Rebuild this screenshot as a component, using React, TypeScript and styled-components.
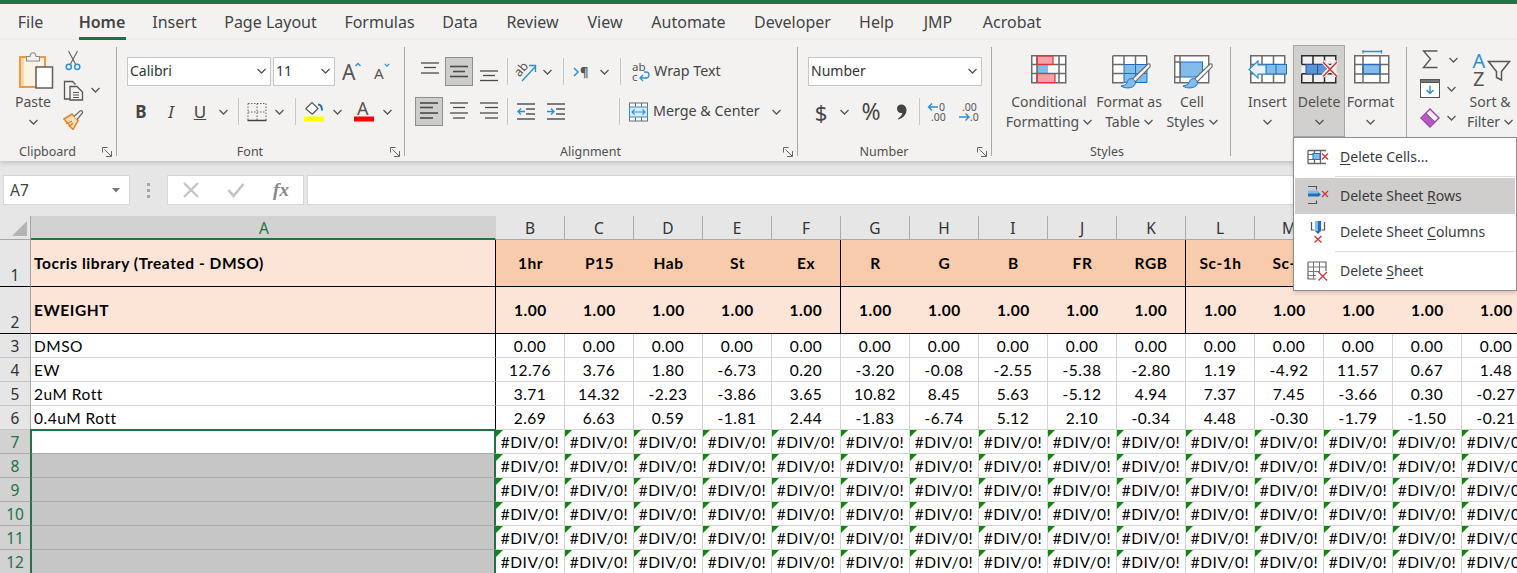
import styled, { createGlobalStyle } from 'styled-components'

const UI_FONT = '"Noto Sans", "Open Sans", sans-serif'
const CELL_FONT = 'Lato, "Noto Sans", sans-serif'
const GREEN = '#217346'
const GREY = '#6a6a6a'
const BLUE = '#2b8fd8'
const LIGHT_BLUE = '#83bbea'
const DEEP_BLUE = '#1b6ec2'
const RED = '#d13438'

const GlobalStyle = createGlobalStyle`
  html, body {
    margin: 0;
    padding: 0;
    background: #fff;
  }
  * {
    box-sizing: border-box;
  }
`

const Page = styled.div`
  position: relative;
  width: 1517px;
  height: 573px;
  overflow: hidden;
  font-family: ${UI_FONT};
  color: #444;
  background: #e6e6e6;
`

const TitleStrip = styled.div`
  height: 4px;
  background: ${GREEN};
`

const TabBar = styled.div`
  display: flex;
  height: 36px;
  padding-left: 4px;
  background: #f3f2f1;
`

const Tab = styled.div<{ $w: number; $ml?: number; $active?: boolean }>`
  position: relative;
  width: ${({ $w }) => $w}px;
  margin-left: ${({ $ml }) => $ml ?? 0}px;
  height: 36px;
  line-height: 37px;
  flex: none;
  text-align: center;
  font-size: 16px;
  white-space: nowrap;
  font-weight: ${({ $active }) => ($active ? 600 : 400)};
  color: #444;

  &::after {
    content: '';
    display: ${({ $active }) => ($active ? 'block' : 'none')};
    position: absolute;
    left: 14px;
    right: 13px;
    bottom: 0;
    height: 3px;
    background: ${GREEN};
  }
`

const Ribbon = styled.div`
  display: flex;
  height: 121px;
  padding-top: 7px;
  background: #f3f2f1;
  box-shadow: 0 2px 5px rgba(0, 0, 0, 0.16);
  position: relative;
  z-index: 2;
`

const Group = styled.div<{ $w: number; $last?: boolean }>`
  width: ${({ $w }) => $w}px;
  height: 109px;
  flex: none;
  display: flex;
  flex-direction: column;
  border-right: ${({ $last }) => ($last ? 'none' : '1px solid #a9a9a9')};
`

const GroupBody = styled.div<{ $pl: number }>`
  height: 92px;
  flex: none;
  display: flex;
  padding-left: ${({ $pl }) => $pl}px;
`

const GroupFooter = styled.div<{ $pr: number }>`
  flex: 1;
  display: flex;
  align-items: flex-start;
  padding-right: ${({ $pr }) => $pr}px;
`

const GroupLabel = styled.div`
  flex: 1;
  text-align: center;
  font-size: 12.5px;
  line-height: 17px;
  padding: 4px 7px 0 0;
  color: #505050;
`

const Launcher = styled.div`
  width: 10px;
  height: 10px;
  margin-top: 8px;
  flex: none;
  display: flex;
`

const RowsColumn = styled.div`
  display: flex;
  flex-direction: column;
  gap: 11px;
  padding-top: 10px;
`

const ToolRow = styled.div`
  display: flex;
  align-items: center;
  height: 29px;
`

const Tool = styled.div<{ $w: number; $ml?: number; $active?: boolean }>`
  width: ${({ $w }) => $w}px;
  height: 29px;
  margin-left: ${({ $ml }) => $ml ?? 0}px;
  flex: none;
  display: flex;
  align-items: center;
  justify-content: center;
  color: #444;
  background: ${({ $active }) => ($active ? '#cdcdcb' : 'transparent')};
  border: ${({ $active }) => ($active ? '1px solid #8e8e8e' : 'none')};
`

const Divider = styled.div<{ $ml: number }>`
  width: 1px;
  height: 27px;
  margin-left: ${({ $ml }) => $ml}px;
  flex: none;
  background: #c8c6c4;
`

const ToolText = styled.span<{ $w: number; $ml: number }>`
  width: ${({ $w }) => $w}px;
  margin-left: ${({ $ml }) => $ml}px;
  padding-bottom: 2px;
  flex: none;
  font-size: 14.3px;
  white-space: nowrap;
  color: #444;
`

const Glyph = styled.span<{ $size: number; $bold?: boolean; $italic?: boolean; $under?: boolean }>`
  font-family: ${UI_FONT};
  font-size: ${({ $size }) => $size}px;
  line-height: 1;
  color: #444;
  font-weight: ${({ $bold }) => ($bold ? 700 : 400)};
  font-style: ${({ $italic }) => ($italic ? 'italic' : 'normal')};
  text-decoration: ${({ $under }) => ($under ? 'underline' : 'none')};
`

const Select = styled.div<{ $w: number; $ml?: number }>`
  width: ${({ $w }) => $w}px;
  height: 29px;
  margin-left: ${({ $ml }) => $ml ?? 0}px;
  flex: none;
  display: flex;
  align-items: center;
  justify-content: space-between;
  padding: 0 4px 2px 2px;
  background: #fff;
  border: 1px solid #c6c6c6;
  font-size: 14px;
  color: #333;
`

const LargeButton = styled.div<{ $w: number; $open?: boolean }>`
  width: ${({ $w }) => $w}px;
  height: 92px;
  margin-top: -2px;
  flex: none;
  display: flex;
  flex-direction: column;
  align-items: center;
  padding-top: 5px;
  background: ${({ $open }) => ($open ? '#d2d0ce' : 'transparent')};
  box-shadow: ${({ $open }) => ($open ? 'inset 0 0 0 1px #a6a6a6' : 'none')};
`

const LargeIcon = styled.div<{ $shift?: number }>`
  height: 42px;
  flex: none;
  display: flex;
  justify-content: center;
  padding-left: ${({ $shift }) => ($shift ?? 0) * 2}px;
`

const LargeLine = styled.div`
  height: 20px;
  line-height: 20px;
  display: flex;
  align-items: center;
  gap: 4px;
  font-size: 14px;
  white-space: nowrap;
  color: #505050;
`

const SmallStack = styled.div<{ $rowH: number }>`
  display: grid;
  grid-auto-rows: ${({ $rowH }) => $rowH}px;
  margin-top: -2px;
`

const StackRow = styled.div`
  display: flex;
  align-items: center;
`

const StackIcon = styled.div<{ $w: number }>`
  width: ${({ $w }) => $w}px;
  flex: none;
  display: flex;
  justify-content: center;
`

const StackChevron = styled.div<{ $w: number }>`
  width: ${({ $w }) => $w}px;
  flex: none;
  display: flex;
  justify-content: center;
`

const FormulaBar = styled.div`
  height: 55px;
  display: flex;
  align-items: flex-start;
  padding: 14px 0 0 3px;
  background: #e6e6e6;
`

const NameBox = styled.div`
  width: 127px;
  height: 30px;
  flex: none;
  display: flex;
  align-items: center;
  justify-content: space-between;
  padding: 0 8px 0 6px;
  background: #fff;
  border: 1px solid #d6d6d6;
  font-size: 15.5px;
  color: #444;
`

const GripDots = styled.div`
  width: 37px;
  height: 30px;
  flex: none;
  display: flex;
  flex-direction: column;
  align-items: center;
  justify-content: center;
  gap: 3px;

  span {
    width: 3px;
    height: 3px;
    background: #a6a6a6;
  }
`

const FormulaButtons = styled.div`
  width: 137px;
  height: 30px;
  flex: none;
  display: flex;
  align-items: center;
  background: #fff;
  border: 1px solid #d6d6d6;
`

const FormulaButton = styled.div<{ $w: number }>`
  width: ${({ $w }) => $w}px;
  flex: none;
  display: flex;
  justify-content: center;
`

const FxLabel = styled.span`
  font-family: 'Liberation Serif', serif;
  font-style: italic;
  font-weight: 700;
  font-size: 19px;
  color: #888;
`

const FormulaInput = styled.div`
  flex: 1;
  height: 30px;
  margin-left: 3px;
  background: #fff;
  border: 1px solid #d6d6d6;
  border-right: none;
`

const Sheet = styled.div`
  display: grid;
  width: 1531px;
  grid-template-columns: 31px 465px repeat(15, 69px);
  grid-template-rows: 24px 47px 47px repeat(10, 24px);
  background: #fff;
  font-family: ${CELL_FONT};
`

const Corner = styled.div`
  background: #e6e6e6;
  border-right: 1px solid #a6a6a6;
  border-bottom: 1px solid #a6a6a6;
  display: flex;
  align-items: flex-end;
  justify-content: flex-end;
  padding: 0 3px 3px 0;

  &::after {
    content: '';
    width: 0;
    height: 0;
    border-left: 15px solid transparent;
    border-bottom: 15px solid #b4b4b4;
  }
`

const ColumnHead = styled.div<{ $selected?: boolean }>`
  display: flex;
  align-items: center;
  justify-content: center;
  padding: 1px 0 0 ${({ $selected }) => ($selected ? 2 : 0)}px;
  font-family: ${UI_FONT};
  font-size: 15.5px;
  color: ${({ $selected }) => ($selected ? GREEN : '#333')};
  background: ${({ $selected }) => ($selected ? '#d2d2d2' : '#e6e6e6')};
  border-right: 1px solid ${({ $selected }) => ($selected ? '#d2d2d2' : '#ababab')};
  border-bottom: ${({ $selected }) => ($selected ? `2px solid ${GREEN}` : '1px solid #ababab')};
`

const RowHead = styled.div<{ $selected?: boolean; $tall?: boolean }>`
  display: flex;
  align-items: ${({ $tall }) => ($tall ? 'flex-end' : 'center')};
  justify-content: center;
  font-family: ${UI_FONT};
  font-size: 15.5px;
  color: ${({ $selected }) => ($selected ? GREEN : '#333')};
  background: ${({ $selected }) => ($selected ? '#d2d2d2' : '#e6e6e6')};
  border-right: 1px solid #a6a6a6;
  border-bottom: 1px solid ${({ $selected, $tall }) => ($tall ? '#000' : $selected ? '#ababab' : '#c4c4c4')};
`

const TitleCell = styled.div<{ $tone: 'dark' | 'light'; $edge?: boolean; $first?: boolean }>`
  display: flex;
  align-items: center;
  justify-content: ${({ $first }) => ($first ? 'flex-start' : 'center')};
  padding-left: ${({ $first }) => ($first ? '3px' : '0')};
  font-weight: 700;
  font-size: 15.5px;
  letter-spacing: 0.55px;
  color: #000;
  white-space: nowrap;
  overflow: hidden;
  background: ${({ $tone }) => ($tone === 'dark' ? '#f8cbad' : '#fce4d6')};
  border-bottom: 1px solid #000;
  border-right: ${({ $edge }) => ($edge ? '1px solid #000' : 'none')};
`

const DataCell = styled.div<{ $error?: boolean }>`
  position: relative;
  display: flex;
  align-items: center;
  justify-content: center;
  padding-top: 1px;
  font-size: 15.5px;
  letter-spacing: 0.5px;
  color: #000;
  white-space: nowrap;
  overflow: hidden;
  border-right: 1px solid #d4d4d4;
  border-bottom: 1px solid #d4d4d4;

  &::before {
    content: '';
    display: ${({ $error }) => ($error ? 'block' : 'none')};
    position: absolute;
    left: 0;
    top: 0;
    border-top: 7px solid #0a8a0a;
    border-right: 7px solid transparent;
  }
`

const LabelCell = styled(DataCell)`
  justify-content: flex-start;
  padding-left: 3px;
  border-right: 1px solid #000;
`

const SelectedCell = styled.div<{ $active?: boolean }>`
  background: ${({ $active }) => ($active ? '#fff' : '#c6c6c6')};
  border-left: 1px solid ${GREEN};
  border-right: 2px solid ${GREEN};
  border-top: ${({ $active }) => ($active ? `1px solid ${GREEN}` : 'none')};
  border-bottom: 1px solid #ababab;
  box-shadow: -1px 0 0 ${GREEN};
  position: relative;

  &::before {
    content: '';
    display: ${({ $active }) => ($active ? 'block' : 'none')};
    position: absolute;
    left: -2px;
    right: -2px;
    top: -2px;
    height: 1px;
    background: ${GREEN};
  }
`

const Menu = styled.div`
  position: absolute;
  left: 1293px;
  top: 137px;
  width: 224px;
  height: 154px;
  z-index: 5;
  display: flex;
  flex-direction: column;
  padding: 1px;
  background: #fff;
  border: 1px solid #8f8f8f;
  box-shadow: 0 2px 4px rgba(0, 0, 0, 0.15);
`

const MenuItem = styled.div<{ $h: number; $pb: number; $hot?: boolean }>`
  height: ${({ $h }) => $h}px;
  padding-bottom: ${({ $pb }) => $pb}px;
  flex: none;
  display: flex;
  align-items: center;
  background: ${({ $hot }) => ($hot ? '#d0cecc' : 'transparent')};
`

const MenuIcon = styled.div`
  width: 45px;
  flex: none;
  display: flex;
  justify-content: center;
`

const MenuText = styled.span`
  font-size: 14px;
  color: #3a3a3a;
  white-space: nowrap;

  u {
    text-underline-offset: 2px;
  }
`

const MenuRule = styled.div<{ $mb?: number }>`
  height: 1px;
  flex: none;
  margin: 0 0 ${({ $mb }) => $mb ?? 0}px 40px;
  background: #dcdcdc;
`

const Chevron = () => (
  <svg width="9" height="6" viewBox="0 0 9 6" fill="none" stroke="#555" strokeWidth="1.3">
    <polyline points="0.5,1 4.5,5 8.5,1" />
  </svg>
)

const LauncherIcon = () => (
  <svg width="10" height="10" viewBox="0 0 10 10" fill="none" stroke="#666" strokeWidth="1">
    <polyline points="5.5,0.5 0.5,0.5 0.5,5.5" />
    <polyline points="9.5,4 9.5,9.5 4,9.5" />
    <line x1="2.5" y1="2.5" x2="9" y2="9" />
  </svg>
)

const PasteIcon = () => (
  <svg width="36" height="42" viewBox="0 0 36 42" fill="none">
    <rect x="2" y="7" width="25" height="30" fill="#fdf3e3" stroke="#ed9b3e" strokeWidth="2" />
    <rect x="3" y="8" width="3" height="28" fill="#f9d9a8" />
    <path d="M8.500 11V6.500h3.500c.5-5 5.500-5 6 0h3.500V11z" fill="#f3f2f1" stroke="#8a8a8a" strokeWidth="1.200" />
    <rect x="18" y="17" width="16.500" height="21" fill="#fff" stroke="#5e5e5e" strokeWidth="1.500" />
  </svg>
)

const CutIcon = () => (
  <svg width="16" height="21" viewBox="0 0 16 21" fill="none">
    <line x1="3.5" y1="1" x2="10.5" y2="14" stroke={GREY} strokeWidth="1.2" />
    <line x1="12.5" y1="1" x2="5.5" y2="14" stroke={GREY} strokeWidth="1.2" />
    <circle cx="3.8" cy="16.8" r="2.6" stroke={BLUE} strokeWidth="1.5" />
    <circle cx="12.2" cy="16.8" r="2.6" stroke={BLUE} strokeWidth="1.5" />
  </svg>
)

const CopyIcon = () => (
  <svg width="21" height="21" viewBox="0 0 21 21" fill="none" stroke="#555">
    <path d="M7 19H1.500V1.500h8l3 3" strokeWidth="1.300" />
    <path d="M7 6.500h7l5.500 5.500v8H7z" fill="#f3f2f1" strokeWidth="1.300" />
    <path d="M10 12.500h6M10 15h6M10 17.500h6" strokeWidth="1" />
  </svg>
)

const PainterIcon = () => (
  <svg width="21" height="20" viewBox="0 0 21 20" fill="none">
    <path d="M1 9l8-5 6 6.500-5 9z" fill="#fbe0c0" stroke="#e8821e" strokeWidth="1.500" />
    <path d="M3 14l6-3M6 17l4-4" stroke="#e8821e" strokeWidth="1.300" />
    <path d="M11 6.500l6-5.500c2-1 3.500 1 2 2.500l-5 6" fill="#f3f2f1" stroke={GREY} strokeWidth="1.200" />
  </svg>
)

const AlignLines = ({ spec, width }: { spec: number[][]; width?: number }) => (
  <svg width="20" height="20" viewBox="0 0 20 20" stroke="#4a4a4a" strokeWidth={width ?? 1.300}>
    {spec.map(([x1, x2, y], i) => (
      <line key={i} x1={x1} x2={x2} y1={y} y2={y} />
    ))}
  </svg>
)

const OrientationIcon = () => (
  <svg width="22" height="20" viewBox="0 0 22 20" fill="none">
    <text x="0" y="12" fontSize="12.500" fill="#555" fontFamily={UI_FONT} transform="rotate(-50 6 9)">ab</text>
    <path d="M7 19L20 5M14 3.500h6.500V10" stroke={BLUE} strokeWidth="1.400" />
  </svg>
)

const ParagraphIcon = () => (
  <svg width="17" height="16" viewBox="0 0 17 16" fill="none">
    <polyline points="1,4 5,8 1,12" stroke={BLUE} strokeWidth="1.500" />
    <text x="7" y="13" fontSize="13" fontWeight="700" fill="#555" fontFamily={UI_FONT}>¶</text>
  </svg>
)

const IndentIcon = ({ increase }: { increase?: boolean }) => (
  <svg width="18" height="18" viewBox="0 0 18 18" fill="none">
    <path d="M0 1h18M9 6h9M9 11h9M0 16h18" stroke="#555" strokeWidth="1.300" />
    <path
      d={increase ? 'M0 8.500h7M4 5.500l3 3-3 3' : 'M8 8.500H1M4 5.500l-3 3 3 3'}
      stroke={BLUE}
      strokeWidth="1.400"
    />
  </svg>
)

const WrapIcon = () => (
  <svg width="18" height="20" viewBox="0 0 18 20" fill="none">
    <text x="0" y="9" fontSize="11.500" fill="#555" fontFamily={UI_FONT}>ab</text>
    <text x="0" y="19" fontSize="11.500" fill="#555" fontFamily={UI_FONT}>c</text>
    <path d="M9 16h5c4 0 4-6 0-6h-2M11 13l-3 3 3 3" stroke={BLUE} strokeWidth="1.300" />
  </svg>
)

const MergeIcon = () => (
  <svg width="20" height="20" viewBox="0 0 20 20" fill="none">
    <rect x="0.500" y="1" width="18" height="18" fill="#fff" stroke={GREY} />
    <path d="M6.500 1v4M12.500 1v4M6.500 15v4M12.500 15v4" stroke={GREY} />
    <rect x="0.500" y="5" width="18" height="10" fill="#d9ecfa" stroke={BLUE} />
    <path d="M3 10h13M5.500 7.500L3 10l2.500 2.500M13.500 7.500L16 10l-2.500 2.500" stroke={BLUE} strokeWidth="1.100" />
  </svg>
)

const GrowIcon = ({ up }: { up?: boolean }) => (
  <svg width="20" height="22" viewBox="0 0 20 22" fill="none">
    <text x="0" y="19" fontSize={up ? 21 : 17} fill="#555" fontFamily={UI_FONT}>A</text>
    <polyline
      points={up ? '13.500,5 16,2.500 18.500,5' : '12,2 14.500,4.500 17,2'}
      stroke={BLUE}
      strokeWidth="1.400"
    />
  </svg>
)

const BordersIcon = () => (
  <svg width="20" height="20" viewBox="0 0 20 20" fill="none" stroke="#666">
    <path d="M1 1.500h18M1 1.500v17M19 1.500v17M10 1.500v17M1 10h18" strokeDasharray="1.500 1.500" />
    <path d="M0.500 18.500h19" strokeWidth="1.500" stroke="#444" />
  </svg>
)

const FillIcon = () => (
  <svg width="22" height="22" viewBox="0 0 22 22" fill="none">
    <path d="M3 7.500l6-6 6 6-5 5a1 1 0 01-1.500 0L3 8z" fill="#fff" stroke="#555" strokeWidth="1.200" />
    <path d="M15 3.500c3 0 4 3 4 6" stroke={DEEP_BLUE} strokeWidth="2" />
    <rect x="1" y="15.500" width="20" height="5" fill="#ffff00" />
  </svg>
)

const FontColorIcon = () => (
  <svg width="22" height="24" viewBox="0 0 22 24" fill="none">
    <text x="4" y="15" fontSize="18" fill="#555" fontFamily={UI_FONT}>A</text>
    <rect x="1" y="16.500" width="20" height="5" fill="#ff0000" />
  </svg>
)

const CommaIcon = () => (
  <svg width="11" height="16" viewBox="0 0 11 16">
    <path d="M1 4.500C1 2 3 .5 5.500.5 8.500.5 10.500 3 10.500 6c0 4.500-3.500 8-8 9.500l-.5-1c2.500-1.500 4-3.500 4.300-5.500C3 9.500 1 7.500 1 4.500z" fill="#444" />
  </svg>
)

const DecimalIcon = ({ more }: { more?: boolean }) => (
  <svg width="21" height="22" viewBox="0 0 21 22" fill="none">
    <text x={more ? 12 : 4} y="9.500" fontSize="10.500" fill="#555" fontFamily={UI_FONT}>
      {more ? '0' : '.00'}
    </text>
    <text x={more ? 4 : 12} y="20" fontSize="10.500" fill="#555" fontFamily={UI_FONT}>
      {more ? '.00' : '.0'}
    </text>
    <path
      d={more ? 'M11 6H1.500M5 2.500L1.500 6 5 9.500' : 'M1 16h10M7.500 12.500L11 16l-3.500 3.500'}
      stroke={BLUE}
      strokeWidth="1.400"
    />
  </svg>
)

const Thirds = ({ stroke }: { stroke: string }) => (
  <path
    d="M0.750 5.750h34v27h-34zM0.750 14.500h34M0.750 23.750h34M12 5.750v27M23.500 5.750v27"
    fill="none"
    stroke={stroke}
    strokeWidth="1.500"
  />
)

const ConditionalIcon = () => (
  <svg width="36" height="42" viewBox="0 0 36 42">
    <rect x="0.500" y="6" width="35" height="26" fill="#fff" />
    <rect x="6" y="6" width="16" height="8.500" fill="#f8a0a8" />
    <rect x="6" y="23.500" width="18" height="9" fill="#f8a0a8" />
    <rect x="6" y="14.500" width="11" height="9" fill={LIGHT_BLUE} />
    <path
      d="M0.750 5.750h34v27h-34zM0.750 14.500h34M0.750 23.500h34M6 5.750v27M28 5.750v27"
      fill="none"
      stroke={GREY}
      strokeWidth="1.500"
    />
    <path d="M6 6h16v8.500H6zM6 23.500h18v9H6z" fill="none" stroke="#e3313a" strokeWidth="1.200" />
  </svg>
)

const Brush = () => (
  <g>
    <path d="M36 14L20 29.500l3 2.500L38 17c1-2.500-1-4-2-3z" fill="#fff" stroke={GREY} strokeWidth="1.100" />
    <path d="M19.500 28.500c-3.500 0-4 3-5 5-1 1.500-3 2-5.500 2.500 4 3 12 2.500 14-1.500 1-2.500 0-5-3.500-6z" fill={LIGHT_BLUE} stroke={DEEP_BLUE} strokeWidth="1" />
  </g>
)

const TableIcon = () => (
  <svg width="40" height="42" viewBox="0 0 40 42">
    <rect x="0.500" y="6" width="35" height="26" fill="#fff" />
    <rect x="12" y="14.500" width="23" height="18" fill={LIGHT_BLUE} />
    <path d="M12 14.500h23M12 23.500h23M23.500 14.500v18M12 14.500v18M12 32.500h23M35 14.500v18" fill="none" stroke={DEEP_BLUE} />
    <path d="M0.750 5.750h34M0.750 5.750v27h11M0.750 14.500h11M0.750 23.500h11M12 5.750v9M23.500 5.750v9M34.750 5.750v9" fill="none" stroke={GREY} strokeWidth="1.500" />
    <Brush />
  </svg>
)

const StylesIcon = () => (
  <svg width="40" height="42" viewBox="0 0 40 42">
    <rect x="0.500" y="6" width="35" height="26" fill="#fff" />
    <rect x="6.500" y="12" width="22" height="15" fill={LIGHT_BLUE} stroke={DEEP_BLUE} />
    <path d="M0.750 5.750h34v27h-34zM6 5.750v27M0.750 12h6M0.750 27h6" fill="none" stroke={GREY} strokeWidth="1.400" />
    <Brush />
  </svg>
)

const InsertIcon = () => (
  <svg width="40" height="42" viewBox="0 0 40 42">
    <rect x="2.500" y="6" width="35" height="26" fill="#fff" />
    <g transform="translate(2 0)">
      <Thirds stroke={GREY} />
    </g>
    <rect x="18" y="14.500" width="20.500" height="9.500" fill={LIGHT_BLUE} stroke={DEEP_BLUE} />
    <path d="M28 14.500v9.500" stroke={DEEP_BLUE} />
    <path d="M18 15h-8v-4L1 19.500 10 28v-4h8z" fill="#e8f3fc" stroke={BLUE} strokeWidth="1.200" />
  </svg>
)

const DeleteIcon = () => (
  <svg width="40" height="42" viewBox="0 0 40 42">
    <rect x="0.500" y="6" width="35" height="26" fill="#f1f1f1" />
    <path
      d="M0.750 14.500v-8.750h34v8.750M0.750 14.500h34M0.750 23.750v9h34v-9M0.750 23.750h34M12 5.750v27M23.500 5.750v27"
      fill="none"
      stroke="#2b2b2b"
      strokeWidth="1.500"
    />
    <rect x="5" y="14.500" width="21" height="9.500" fill="#5b95d2" stroke="#2a4f9b" />
    <path d="M16.500 14.500v9.500" stroke="#2a4f9b" />
    <path d="M22 11.500l14 14.500M22 26l14-14.500" stroke="#f3f2f1" strokeWidth="4" />
    <path d="M22 12l14 14.500M22 26.500L36 12" stroke={RED} strokeWidth="1.500" />
  </svg>
)

const FormatIcon = () => (
  <svg width="36" height="42" viewBox="0 0 36 42">
    <path d="M9 1.500h18.500M9 0v3.500M27.500 0v3.500" stroke={BLUE} strokeWidth="1.300" fill="none" />
    <rect x="0.500" y="6" width="35" height="26" fill="#fff" />
    <rect x="9" y="14.500" width="17" height="9.500" fill={LIGHT_BLUE} />
    <path d="M0.750 5.750h34v27h-34zM0.750 14.500h34M0.750 24h34M9 5.750v27M26 5.750v27" fill="none" stroke={GREY} strokeWidth="1.500" />
    <path d="M9 14.500h17v9.500H9z" fill="none" stroke={DEEP_BLUE} strokeWidth="1.200" />
  </svg>
)

const SigmaIcon = () => (
  <svg width="17" height="19" viewBox="0 0 17 19" fill="none">
    <path d="M15.500 1H1.500l7 8-7 8.500h14" stroke="#555" strokeWidth="1.400" />
  </svg>
)

const FillDownIcon = () => (
  <svg width="20" height="19" viewBox="0 0 20 19" fill="none">
    <rect x="0.500" y="0.500" width="19" height="18" fill="#fff" stroke="#555" />
    <rect x="0.500" y="0.500" width="19" height="3" fill="#777" stroke="#555" />
    <path d="M10 6.500v8M6.500 11l3.500 3.500 3.500-3.500" stroke={BLUE} strokeWidth="1.400" />
  </svg>
)

const EraserIcon = () => (
  <svg width="20" height="20" viewBox="0 0 20 20">
    <path d="M10 1l9 9-9 9-9-9z" fill="#f3f2f1" stroke="#a03fb0" strokeWidth="1.400" />
    <path d="M1 10l5-5 9 9-5 5z" fill="#b15bc2" stroke="#a03fb0" />
  </svg>
)

const SortFilterIcon = () => (
  <svg width="44" height="42" viewBox="0 0 44 42" fill="none">
    <text x="4.500" y="18" fontSize="20" fill={BLUE} fontFamily={UI_FONT}>A</text>
    <text x="5" y="36" fontSize="20" fill="#555" fontFamily={UI_FONT}>Z</text>
    <path d="M20.500 11.500h21l-8 10v8.500l-5-2.500v-6z" fill="#f3f2f1" stroke="#555" strokeWidth="1.500" />
  </svg>
)

const CrossIcon = ({ color, width }: { color: string; width: number }) => (
  <svg width="18" height="18" viewBox="0 0 18 18" fill="none">
    <path d="M2 2l14 14M16 2L2 16" stroke={color} strokeWidth={width} />
  </svg>
)

const CheckIcon = () => (
  <svg width="18" height="16" viewBox="0 0 18 16" fill="none">
    <path d="M1.500 8l5 6L16.500 2" stroke="#c3c3c3" strokeWidth="2.600" />
  </svg>
)

const DropTriangle = () => (
  <svg width="10" height="6" viewBox="0 0 10 6">
    <path d="M1 1h8L5 5.500z" fill="#777" />
  </svg>
)

const MenuCellsIcon = () => (
  <svg width="22" height="20" viewBox="0 0 22 20" fill="none">
    <path d="M1 3.500h18M1 16.500h18M1 3.500v13M7.500 3.500v13M13.500 3.500v13" stroke="#666" strokeWidth="1.300" />
    <path d="M1 7.500h7M1 12.500h7" stroke="#666" />
    <rect x="6" y="6.500" width="7" height="6" fill={LIGHT_BLUE} stroke={DEEP_BLUE} />
    <path d="M15 6.500l6 6M21 6.500l-6 6" stroke={RED} strokeWidth="1.300" />
  </svg>
)

const MenuRowsIcon = () => (
  <svg width="22" height="20" viewBox="0 0 22 20" fill="none">
    <path d="M1 1.500h8.500v3M1 18.500h8.500v-3" stroke="#555" strokeWidth="1.200" />
    <rect x="1" y="5.500" width="10" height="3" fill={LIGHT_BLUE} />
    <rect x="1" y="8.500" width="10" height="3" fill={DEEP_BLUE} />
    <path d="M11 7l3 2.500-3 2.500z" fill={DEEP_BLUE} />
    <path d="M15 6l6 6M21 6l-6 6" stroke={RED} strokeWidth="1.300" />
  </svg>
)

const MenuColumnsIcon = () => (
  <svg width="22" height="22" viewBox="0 0 22 22" fill="none">
    <path d="M4.500 1v8h3M17.500 1v8h-3" stroke="#555" strokeWidth="1.200" />
    <rect x="8" y="0" width="3" height="10" fill={LIGHT_BLUE} />
    <rect x="11" y="0" width="3" height="10" fill={DEEP_BLUE} />
    <path d="M8 10l3 3 3-3z" fill={DEEP_BLUE} />
    <path d="M7.500 15l7 6.500M14.500 15l-7 6.500" stroke={RED} strokeWidth="1.300" />
  </svg>
)

const MenuSheetIcon = () => (
  <svg width="22" height="20" viewBox="0 0 22 20" fill="none">
    <path d="M1 1h18v9M1 1v17h8" stroke="#666" strokeWidth="1.200" />
    <path d="M1 6h18M1 10.500h12M1 14.500h8M6.500 1v17M12.500 1v9" stroke="#777" />
    <path d="M11.500 11l8.500 8.500M20 11l-8.500 8.500" stroke={RED} strokeWidth="1.300" />
  </svg>
)

const TABS = [
  { label: 'File', w: 53 },
  { label: 'Home', w: 74, ml: 8, active: true },
  { label: 'Insert', w: 71 },
  { label: 'Page Layout', w: 121 },
  { label: 'Formulas', w: 97 },
  { label: 'Data', w: 64 },
  { label: 'Review', w: 81 },
  { label: 'View', w: 64 },
  { label: 'Automate', w: 103 },
  { label: 'Developer', w: 105 },
  { label: 'Help', w: 63 },
  { label: 'JMP', w: 60 },
  { label: 'Acrobat', w: 88 },
]

const COLUMNS = ['B', 'C', 'D', 'E', 'F', 'G', 'H', 'I', 'J', 'K', 'L', 'M', 'N', 'O', 'P']
// N, O and P sit behind the open menu in row 1, so their headings stay empty
const HEADINGS = ['1hr', 'P15', 'Hab', 'St', 'Ex', 'R', 'G', 'B', 'FR', 'RGB', 'Sc-1h', 'Sc-R', '', '', '']
const ROWS = [
  { n: 3, label: 'DMSO', values: Array(15).fill('0.00') },
  {
    n: 4,
    label: 'EW',
    values: ['12.76', '3.76', '1.80', '-6.73', '0.20', '-3.20', '-0.08', '-2.55', '-5.38', '-2.80', '1.19', '-4.92', '11.57', '0.67', '1.48'],
  },
  {
    n: 5,
    label: '2uM Rott',
    values: ['3.71', '14.32', '-2.23', '-3.86', '3.65', '10.82', '8.45', '5.63', '-5.12', '4.94', '7.37', '7.45', '-3.66', '0.30', '-0.27'],
  },
  {
    n: 6,
    label: '0.4uM Rott',
    values: ['2.69', '6.63', '0.59', '-1.81', '2.44', '-1.83', '-6.74', '5.12', '2.10', '-0.34', '4.48', '-0.30', '-1.79', '-1.50', '-0.21'],
  },
]
const ERROR_ROWS = [7, 8, 9, 10, 11, 12]

// last column of each block carries the black rule
const isBlockEnd = (i: number) => i === 4 || i === 9

function Footer({ label, pr, launcher = true }: { label: string; pr: number; launcher?: boolean }) {
  return (
    <GroupFooter $pr={pr}>
      <GroupLabel>{label}</GroupLabel>
      {launcher && (
        <Launcher>
          <LauncherIcon />
        </Launcher>
      )}
    </GroupFooter>
  )
}

export default function App() {
  return (
    <Page>
      <GlobalStyle />
      <TitleStrip />
      <TabBar>
        {TABS.map((t) => (
          <Tab key={t.label} $w={t.w} $ml={t.ml} $active={t.active}>
            {t.label}
          </Tab>
        ))}
      </TabBar>

      <Ribbon>
        <Group $w={117}>
          <GroupBody $pl={8}>
            <LargeButton $w={50}>
              <LargeIcon $shift={3}>
                <PasteIcon />
              </LargeIcon>
              <LargeLine>Paste</LargeLine>
              <LargeLine>
                <Chevron />
              </LargeLine>
            </LargeButton>
            <SmallStack $rowH={30}>
              <StackRow>
                <StackIcon $w={30}>
                  <CutIcon />
                </StackIcon>
              </StackRow>
              <StackRow>
                <StackIcon $w={30}>
                  <CopyIcon />
                </StackIcon>
                <StackChevron $w={14}>
                  <Chevron />
                </StackChevron>
              </StackRow>
              <StackRow>
                <StackIcon $w={30}>
                  <PainterIcon />
                </StackIcon>
              </StackRow>
            </SmallStack>
          </GroupBody>
          <Footer label="Clipboard" pr={4} />
        </Group>

        <Group $w={288}>
          <GroupBody $pl={10}>
            <RowsColumn>
              <ToolRow>
                <Select $w={144}>
                  Calibri
                  <Chevron />
                </Select>
                <Select $w={62} $ml={2}>
                  11
                  <Chevron />
                </Select>
                <Tool $w={20} $ml={7}>
                  <GrowIcon up />
                </Tool>
                <Tool $w={18} $ml={12}>
                  <GrowIcon />
                </Tool>
              </ToolRow>
              <ToolRow>
                <Tool $w={28}>
                  <Glyph $size={17} $bold>B</Glyph>
                </Tool>
                <Tool $w={32}>
                  <Glyph $size={17} $italic>I</Glyph>
                </Tool>
                <Tool $w={26}>
                  <Glyph $size={17} $under>U</Glyph>
                </Tool>
                <Tool $w={20}>
                  <Chevron />
                </Tool>
                <Divider $ml={5} />
                <Tool $w={20} $ml={8}>
                  <BordersIcon />
                </Tool>
                <Tool $w={25}>
                  <Chevron />
                </Tool>
                <Divider $ml={3} />
                <Tool $w={22} $ml={7}>
                  <FillIcon />
                </Tool>
                <Tool $w={24}>
                  <Chevron />
                </Tool>
                <Tool $w={22} $ml={4}>
                  <FontColorIcon />
                </Tool>
                <Tool $w={24}>
                  <Chevron />
                </Tool>
              </ToolRow>
            </RowsColumn>
          </GroupBody>
          <Footer label="Font" pr={4} />
        </Group>

        <Group $w={393}>
          <GroupBody $pl={10}>
            <RowsColumn>
              <ToolRow>
                <Tool $w={30}>
                  <AlignLines spec={[[1, 19, 1], [4, 16, 5.5], [1, 19, 11]]} />
                </Tool>
                <Tool $w={28} $active>
                  <AlignLines spec={[[1, 19, 4.5], [4, 16, 9.5], [1, 19, 14.5]]} width={1.600} />
                </Tool>
                <Tool $w={32}>
                  <AlignLines spec={[[1, 19, 9], [4, 16, 13.5], [1, 19, 18.5]]} />
                </Tool>
                <Divider $ml={2} />
                <Tool $w={22} $ml={7}>
                  <OrientationIcon />
                </Tool>
                <Tool $w={20}>
                  <Chevron />
                </Tool>
                <Divider $ml={6} />
                <Tool $w={17} $ml={9}>
                  <ParagraphIcon />
                </Tool>
                <Tool $w={28}>
                  <Chevron />
                </Tool>
                <Divider $ml={2} />
                <Tool $w={18} $ml={11}>
                  <WrapIcon />
                </Tool>
                <ToolText $w={70} $ml={4}>
                  Wrap Text
                </ToolText>
              </ToolRow>
              <ToolRow>
                <Tool $w={28} $active>
                  <AlignLines spec={[[1, 19, 1], [1, 14, 5.5], [1, 19, 11], [1, 14, 16]]} width={1.600} />
                </Tool>
                <Tool $w={32}>
                  <AlignLines spec={[[1, 19, 1], [4, 16, 5.5], [1, 19, 11], [4, 16, 16]]} />
                </Tool>
                <Tool $w={28}>
                  <AlignLines spec={[[1, 19, 1], [6, 19, 5.5], [1, 19, 11], [6, 19, 16]]} />
                </Tool>
                <Divider $ml={4} />
                <Tool $w={18} $ml={9}>
                  <IndentIcon />
                </Tool>
                <Tool $w={18} $ml={12}>
                  <IndentIcon increase />
                </Tool>
                <Divider $ml={54} />
                <Tool $w={20} $ml={9}>
                  <MergeIcon />
                </Tool>
                <ToolText $w={106} $ml={4}>
                  Merge &amp; Center
                </ToolText>
                <Tool $w={34}>
                  <Chevron />
                </Tool>
              </ToolRow>
            </RowsColumn>
          </GroupBody>
          <Footer label="Alignment" pr={4} />
        </Group>

        <Group $w={194}>
          <GroupBody $pl={10}>
            <RowsColumn>
              <ToolRow>
                <Select $w={174}>
                  Number
                  <Chevron />
                </Select>
              </ToolRow>
              <ToolRow>
                <Tool $w={26}>
                  <Glyph $size={22}>$</Glyph>
                </Tool>
                <Tool $w={20}>
                  <Chevron />
                </Tool>
                <Tool $w={34}>
                  <Glyph $size={23}>%</Glyph>
                </Tool>
                <Tool $w={26}>
                  <CommaIcon />
                </Tool>
                <Divider $ml={5} />
                <Tool $w={21} $ml={7}>
                  <DecimalIcon more />
                </Tool>
                <Tool $w={21} $ml={10}>
                  <DecimalIcon />
                </Tool>
              </ToolRow>
            </RowsColumn>
          </GroupBody>
          <Footer label="Number" pr={4} />
        </Group>

        <Group $w={239}>
          <GroupBody $pl={14}>
            <LargeButton $w={86}>
              <LargeIcon>
                <ConditionalIcon />
              </LargeIcon>
              <LargeLine>Conditional</LargeLine>
              <LargeLine>
                Formatting
                <Chevron />
              </LargeLine>
            </LargeButton>
            <LargeButton $w={74}>
              <LargeIcon $shift={3}>
                <TableIcon />
              </LargeIcon>
              <LargeLine>Format as</LargeLine>
              <LargeLine>
                Table
                <Chevron />
              </LargeLine>
            </LargeButton>
            <LargeButton $w={52}>
              <LargeIcon $shift={2}>
                <StylesIcon />
              </LargeIcon>
              <LargeLine>Cell</LargeLine>
              <LargeLine>
                Styles
                <Chevron />
              </LargeLine>
            </LargeButton>
          </GroupBody>
          <Footer label="Styles" launcher={false} pr={1} />
        </Group>

        <Group $w={176}>
          <GroupBody $pl={11}>
            <LargeButton $w={51}>
              <LargeIcon>
                <InsertIcon />
              </LargeIcon>
              <LargeLine>Insert</LargeLine>
              <LargeLine>
                <Chevron />
              </LargeLine>
            </LargeButton>
            <LargeButton $w={52} $open>
              <LargeIcon $shift={2}>
                <DeleteIcon />
              </LargeIcon>
              <LargeLine>Delete</LargeLine>
              <LargeLine>
                <Chevron />
              </LargeLine>
            </LargeButton>
            <LargeButton $w={51}>
              <LargeIcon $shift={1}>
                <FormatIcon />
              </LargeIcon>
              <LargeLine>Format</LargeLine>
              <LargeLine>
                <Chevron />
              </LargeLine>
            </LargeButton>
          </GroupBody>
        </Group>

        <Group $w={110} $last>
          <GroupBody $pl={11}>
            <SmallStack $rowH={29}>
              <StackRow>
                <StackIcon $w={24}>
                  <SigmaIcon />
                </StackIcon>
                <StackChevron $w={22}>
                  <Chevron />
                </StackChevron>
              </StackRow>
              <StackRow>
                <StackIcon $w={24}>
                  <FillDownIcon />
                </StackIcon>
                <StackChevron $w={18}>
                  <Chevron />
                </StackChevron>
              </StackRow>
              <StackRow>
                <StackIcon $w={24}>
                  <EraserIcon />
                </StackIcon>
                <StackChevron $w={18}>
                  <Chevron />
                </StackChevron>
              </StackRow>
            </SmallStack>
            <LargeButton $w={52}>
              <LargeIcon>
                <SortFilterIcon />
              </LargeIcon>
              <LargeLine>Sort &amp;</LargeLine>
              <LargeLine>
                Filter
                <Chevron />
              </LargeLine>
            </LargeButton>
          </GroupBody>
        </Group>
      </Ribbon>

      <FormulaBar>
        <NameBox>
          A7
          <DropTriangle />
        </NameBox>
        <GripDots>
          <span />
          <span />
          <span />
        </GripDots>
        <FormulaButtons>
          <FormulaButton $w={45}>
            <CrossIcon color="#c3c3c3" width={2.2} />
          </FormulaButton>
          <FormulaButton $w={46}>
            <CheckIcon />
          </FormulaButton>
          <FormulaButton $w={44}>
            <FxLabel>fx</FxLabel>
          </FormulaButton>
        </FormulaButtons>
        <FormulaInput />
      </FormulaBar>

      <Sheet>
        <Corner />
        <ColumnHead $selected>A</ColumnHead>
        {COLUMNS.map((c) => (
          <ColumnHead key={c}>{c}</ColumnHead>
        ))}

        <RowHead $tall>1</RowHead>
        <TitleCell $tone="light" $first $edge>
          Tocris library (Treated - DMSO)
        </TitleCell>
        {HEADINGS.map((h, i) => (
          <TitleCell key={i} $tone="dark" $edge={isBlockEnd(i)}>
            {h}
          </TitleCell>
        ))}

        <RowHead $tall>2</RowHead>
        <TitleCell $tone="light" $first $edge>
          EWEIGHT
        </TitleCell>
        {COLUMNS.map((c, i) => (
          <TitleCell key={c} $tone="light" $edge={isBlockEnd(i)}>
            1.00
          </TitleCell>
        ))}

        {ROWS.map((row) => [
          <RowHead key={row.n}>{row.n}</RowHead>,
          <LabelCell key={`${row.n}-a`}>{row.label}</LabelCell>,
          ...row.values.map((v, i) => <DataCell key={`${row.n}-${i}`}>{v}</DataCell>),
        ])}

        {ERROR_ROWS.map((n) => [
          <RowHead key={n} $selected>
            {n}
          </RowHead>,
          <SelectedCell key={`${n}-a`} $active={n === 7} />,
          ...COLUMNS.map((c) => (
            <DataCell key={`${n}-${c}`} $error>
              #DIV/0!
            </DataCell>
          )),
        ])}
      </Sheet>

      <Menu>
        <MenuItem $h={37} $pb={2}>
          <MenuIcon>
            <MenuCellsIcon />
          </MenuIcon>
          <MenuText>
            <u>D</u>elete Cells...
          </MenuText>
        </MenuItem>
        <MenuRule $mb={1} />
        <MenuItem $h={36} $pb={2} $hot>
          <MenuIcon>
            <MenuRowsIcon />
          </MenuIcon>
          <MenuText>
            Delete Sheet <u>R</u>ows
          </MenuText>
        </MenuItem>
        <MenuItem $h={37} $pb={2}>
          <MenuIcon>
            <MenuColumnsIcon />
          </MenuIcon>
          <MenuText>
            Delete Sheet <u>C</u>olumns
          </MenuText>
        </MenuItem>
        <MenuRule />
        <MenuItem $h={37} $pb={0}>
          <MenuIcon>
            <MenuSheetIcon />
          </MenuIcon>
          <MenuText>
            Delete <u>S</u>heet
          </MenuText>
        </MenuItem>
      </Menu>
    </Page>
  )
}
